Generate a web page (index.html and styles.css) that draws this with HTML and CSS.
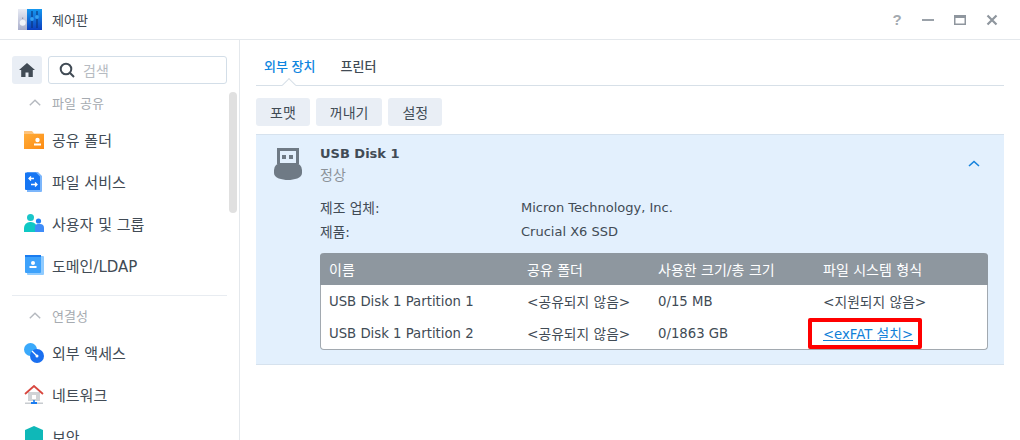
FILE: index.html
```html
<!DOCTYPE html>
<html lang="ko">
<head>
<meta charset="utf-8">
<title>제어판</title>
<link rel="stylesheet" href="styles.css">
</head>
<body>
<div class="window">
  <header class="titlebar">
    <svg class="app-icon" width="24" height="24" viewBox="0 0 24 24">
      <defs>
        <linearGradient id="ag" x1="0" y1="0" x2="0" y2="1"><stop offset="0" stop-color="#e8ebf4"/><stop offset="1" stop-color="#a9aecb"/></linearGradient>
        <linearGradient id="ab" x1="0" y1="0" x2="0" y2="1"><stop offset="0" stop-color="#1598f0"/><stop offset="1" stop-color="#0c3fbf"/></linearGradient>
      </defs>
      <rect x="0" y="1" width="9" height="21" fill="url(#ag)"/>
      <rect x="9" y="1" width="15" height="21" fill="url(#ab)"/>
      <circle cx="4.700" cy="14.700" r="3" fill="#f2f4f9"/>
      <rect x="4.200" y="9.500" width="1" height="1.500" fill="#8b90a8"/>
      <rect x="13.500" y="3" width="1" height="17" fill="#0a2c6e"/>
      <rect x="18.500" y="3" width="1" height="17" fill="#0a2c6e"/>
      <circle cx="14" cy="11" r="1.900" fill="#35a0f0"/>
      <circle cx="19" cy="9" r="1.900" fill="#35a0f0"/>
    </svg>
    <span class="app-title">제어판</span>
    <div class="win-controls">
      <span class="help">?</span>
      <svg width="12" height="12" viewBox="0 0 12 12"><rect y="5" width="12" height="2" fill="#9aa1a9"/></svg>
      <svg width="12" height="12" viewBox="0 0 12 12"><path d="M0 1h12v10H0zM1.500 4v5.500h9V4z" fill="#8f969e" fill-rule="evenodd"/></svg>
      <svg width="12" height="12" viewBox="0 0 12 12"><path d="M1.500 1.500l9 9M10.500 1.500l-9 9" stroke="#8f969e" stroke-width="2.200"/></svg>
    </div>
  </header>
  <div class="body">
    <aside class="sidebar">
      <div class="search-row">
        <button class="home-btn" aria-label="홈">
          <svg width="16" height="14" viewBox="0 0 16 14"><path d="M8 0L0 7h2.200v7h4.300V9.500h3V14h4.300V7H16z" fill="#414b55"/></svg>
        </button>
        <div class="search">
          <svg width="16" height="16" viewBox="0 0 16 16"><circle cx="7" cy="7" r="5.300" fill="none" stroke="#414b55" stroke-width="2"/><path d="M10.800 10.800L15 15" stroke="#414b55" stroke-width="2"/></svg>
          <span>검색</span>
        </div>
      </div>
      <div class="section-head top">
        <svg width="12" height="7" viewBox="0 0 12 7"><path d="M.8 6.300L6 1.200l5.200 5.100" fill="none" stroke="#b5b9bf" stroke-width="1.400"/></svg>
        <span>파일 공유</span>
      </div>
      <div class="nav-item">
        <svg width="20" height="20" viewBox="0 0 20 20"><defs><linearGradient id="f" x1="0" y1="0" x2="1" y2="1"><stop offset="0" stop-color="#ffad3a"/><stop offset="1" stop-color="#fd8b12"/></linearGradient></defs><path d="M0 1h8l2 2.500h10V19H0z" fill="#fdc37c"/><rect y="4" width="20" height="15" fill="url(#f)"/><circle cx="13.500" cy="10" r="2.200" fill="#fff"/><rect x="10" y="13.500" width="7" height="2" fill="#fff"/></svg>
        <span>공유 폴더</span>
      </div>
      <div class="nav-item">
        <svg width="20" height="20" viewBox="0 0 20 20"><path d="M3 0h11l4 4v15a1 1 0 0 1-1 1H3z" fill="#7cb6fb"/><path d="M1 1.500a1 1 0 0 1 1-1h10l4 4V18H2a1 1 0 0 1-1-1z" fill="#1676f3"/><path d="M10 6.500H5M7 4.500L5 6.500l2 2M7 12.500h6M11 10.500l2 2-2 2" fill="none" stroke="#fff" stroke-width="1.300"/></svg>
        <span>파일 서비스</span>
      </div>
      <div class="nav-item">
        <svg width="20" height="20" viewBox="0 0 20 20"><circle cx="6.500" cy="4.500" r="3.500" fill="#19c5c9"/><path d="M0 19v-4a6 6 0 0 1 6-6h1a6 6 0 0 1 6 6v4z" fill="#0fc8c4"/><circle cx="14.500" cy="8" r="2.600" fill="#1f7ef5"/><path d="M11 19v-5a3 3 0 0 1 3-3h2a4 4 0 0 1 4 4v4z" fill="#3f8cf8"/></svg>
        <span>사용자 및 그룹</span>
      </div>
      <div class="nav-item">
        <svg width="20" height="20" viewBox="0 0 20 20"><rect x="3" y="1" width="17" height="19" rx="1" fill="#8fcbff"/><rect x="1" y="0" width="16" height="18" rx="1" fill="#3ea2fb"/><rect x="1" y="0" width="16" height="2" fill="#1a7cf0"/><circle cx="9" cy="8" r="2" fill="#fff"/><rect x="5.500" y="11" width="7" height="2" fill="#fff"/></svg>
        <span>도메인/LDAP</span>
      </div>
      <hr class="divider">
      <div class="section-head">
        <svg width="12" height="7" viewBox="0 0 12 7"><path d="M.8 6.300L6 1.200l5.200 5.100" fill="none" stroke="#b5b9bf" stroke-width="1.400"/></svg>
        <span>연결성</span>
      </div>
      <div class="nav-item">
        <svg width="20" height="20" viewBox="0 0 20 20"><circle cx="6.500" cy="6.500" r="6.500" fill="#3aa9fb"/><circle cx="13" cy="13" r="7" fill="#1a6ff0"/><path d="M8 8l5 5" stroke="#fff" stroke-width="1.200"/><circle cx="13" cy="13" r="1.500" fill="#fff"/></svg>
        <span>외부 액세스</span>
      </div>
      <div class="nav-item">
        <svg width="20" height="20" viewBox="0 0 20 20"><rect x="4" y="7" width="12" height="9" fill="#d0d3d6"/><path d="M1 9l9-8 9 8" fill="none" stroke="#d8473f" stroke-width="1.800"/><rect x="8" y="10" width="4" height="4" fill="#fff"/><rect x="1" y="17.500" width="18" height="1.500" fill="#c8ccd0"/><rect x="9.200" y="15" width="1.600" height="3" fill="#1a7cf0"/><rect x="7" y="17" width="6" height="2" fill="#1a7cf0"/></svg>
        <span>네트워크</span>
      </div>
      <div class="nav-item">
        <svg width="20" height="20" viewBox="0 0 20 20"><path d="M1 4l9-4 9 4v16H1z" fill="#0fb8b8"/></svg>
        <span>보안</span>
      </div>
      <div class="scrollbar"></div>
    </aside>
    <main class="main">
      <nav class="tabs">
        <span class="tab active">외부 장치</span>
        <span class="tab">프린터</span>
      </nav>
      <div class="toolbar">
        <button class="btn">포맷</button>
        <button class="btn">꺼내기</button>
        <button class="btn">설정</button>
      </div>
      <section class="panel">
        <div class="device-head">
          <svg class="usb" width="28" height="32" viewBox="0 0 28 32">
            <rect x="3" width="22" height="16" fill="#6f7a85"/>
            <rect x="6" y="3" width="16" height="12" fill="#e3f0fd"/>
            <rect x="8" y="7" width="4" height="4" fill="#6f7a85"/>
            <rect x="15" y="7" width="4" height="4" fill="#6f7a85"/>
            <path d="M0 22a7 7 0 0 1 7-7h14a7 7 0 0 1 7 7v3c0 5-8 7-14 7s-14-2-14-7z" fill="#6f7a85"/>
          </svg>
          <div class="device-name">
            <div class="name">USB Disk 1</div>
            <div class="status">정상</div>
          </div>
          <svg class="collapse" width="12" height="7" viewBox="0 0 12 7"><path d="M1 6l5-4.500L11 6" fill="none" stroke="#1482dc" stroke-width="1.600"/></svg>
        </div>
        <dl class="props">
          <dt class="ko">제조 업체:</dt><dd>Micron Technology, Inc.</dd>
          <dt class="ko">제품:</dt><dd>Crucial X6 SSD</dd>
        </dl>
        <div class="table">
          <div class="row head"><span>이름</span><span>공유 폴더</span><span>사용한 크기/총 크기</span><span>파일 시스템 형식</span></div>
          <div class="row"><span>USB Disk 1 Partition 1</span><span class="ko">&lt;공유되지 않음&gt;</span><span>0/15 MB</span><span class="ko">&lt;지원되지 않음&gt;</span></div>
          <div class="row"><span>USB Disk 1 Partition 2</span><span class="ko">&lt;공유되지 않음&gt;</span><span>0/1863 GB</span><span><a class="link" href="#">&lt;exFAT <span class="ko">설치</span>&gt;</a></span></div>
          <div class="highlight"></div>
        </div>
      </section>
    </main>
  </div>
</div>
</body>
</html>
```
FILE: styles.css
```css
* { box-sizing: border-box; }
html, body { margin: 0; height: 100%; overflow: hidden; background: #fff; }
body { font-family: "DejaVu Sans", "Noto Sans CJK KR", sans-serif; font-size: 13px; color: #414b55; }
.ko { font-size: 13.75px; }
.window { width: 1020px; height: 440px; display: flex; flex-direction: column; overflow: hidden; }
.titlebar { height: 40px; flex: none; display: flex; align-items: center; padding: 0 0 0 18px; border-bottom: 1px solid #e4e8ec; }
.app-title { margin-left: 10px; font-size: 13px; color: #3d4650; font-family: "Noto Sans CJK KR", sans-serif; }
.win-controls { margin-left: auto; display: flex; align-items: center; gap: 20px; padding-right: 22px; }
.help { font-size: 15px; font-weight: 700; color: #a4aab0; width: 12px; text-align: center; line-height: 12px; margin-left: 2px; margin-right: -1px; font-family: "Liberation Sans", sans-serif; }
.body { flex: 1; display: flex; min-height: 0; }
.sidebar { position: relative; width: 240px; flex: none; border-right: 1px solid #e4e8ec; padding: 16px 12px 0; overflow: hidden; }
.search-row { display: flex; gap: 6px; height: 28px; width: 215px; }
.home-btn { width: 30px; height: 28px; border: 0; border-radius: 3px; background: #e9eef5; display: flex; align-items: center; justify-content: center; padding: 0; }
.search { flex: 1; border: 1px solid #d3dee8; border-radius: 3px; display: flex; align-items: center; gap: 8px; padding-left: 10px; font-size: 14px; color: #b6bbc1; }
.section-head { height: 38px; margin-bottom: -2px; display: flex; align-items: center; gap: 11px; padding-left: 17px; font-size: 13px; color: #a6abb1; }
.section-head.top { margin-top: -1px; }
.nav-item { height: 41.75px; display: flex; align-items: center; gap: 8px; font-size: 15px; padding-left: 12px; color: #414b55; }
.divider { width: 215px; height: 1px; margin: 9px 0 0; border: 0; background: #e8ecf1; }
.scrollbar { position: absolute; left: 229px; top: 52px; width: 8px; height: 121px; border-radius: 4px; background: #e0e0e0; }
.main { flex: 1; min-width: 0; padding: 0 16px; }
.tabs { position: relative; height: 46px; display: flex; gap: 25px; padding: 17px 8px 0; border-bottom: 1px solid #d7e0e8; font-size: 13px; color: #414b55; font-family: "Noto Sans CJK KR", sans-serif; }
.tab { line-height: 18px; font-weight: 500; }
.tab.active { color: #0f86e0; }
.tabs::after { content: ""; position: absolute; left: 28px; bottom: -5px; width: 9px; height: 9px; background: #fff; border-left: 1px solid #d7e0e8; border-top: 1px solid #d7e0e8; transform: rotate(45deg); }
.toolbar { display: flex; gap: 6px; margin-top: 12px; }
.btn { height: 28px; padding: 0 14px; border: 0; border-radius: 3px; background: #e9eef5; color: #414b55; font: 14px "Noto Sans CJK KR", sans-serif; }
.panel { margin-top: 8px; height: 231px; background: #e3f0fd; border-top: 1px solid #d6e2ee; border-bottom: 1px solid #d6e2ee; padding: 13px 16px 0 18px; }
.device-head { display: flex; align-items: flex-start; height: 47px; }
.usb { flex: none; }
.device-name { margin-left: 18px; flex: 1; }
.name { font-weight: 700; font-size: 13px; line-height: 14px; margin-top: -1px; color: #414b55; }
.status { margin-top: 5px; font-size: 14px; color: #8b9299; line-height: 16px; font-family: "Noto Sans CJK KR", sans-serif; }
.collapse { margin: 12px 8px 0 0; }
.props { margin: 1px 0 0 46px; display: grid; grid-template-columns: 201px 1fr; grid-auto-rows: 24px; align-items: center; }
.props dd, .props dt { margin: 0; line-height: 24px; }
.table { position: relative; margin: 9px 0 0 46px; width: 668px; background: #fff; border: 1px solid #a2a9b0; border-top: 0; border-radius: 4px; height: 97px; }
.row { display: grid; grid-template-columns: 198px 131px 165px 1fr; padding-left: 8px; height: 32px; align-items: center; white-space: nowrap; font-size: 13.25px; }
.row.head { margin: 0 -1px; padding-left: 9px; background: #8e979f; color: #fff; border-radius: 4px 4px 0 0; font-size: 14px; }
.link { color: #0f7fd8; text-decoration: underline; }
.highlight { position: absolute; left: 487px; top: 65px; width: 114px; height: 31px; border: 4px solid #f00; border-radius: 2px; }
```
